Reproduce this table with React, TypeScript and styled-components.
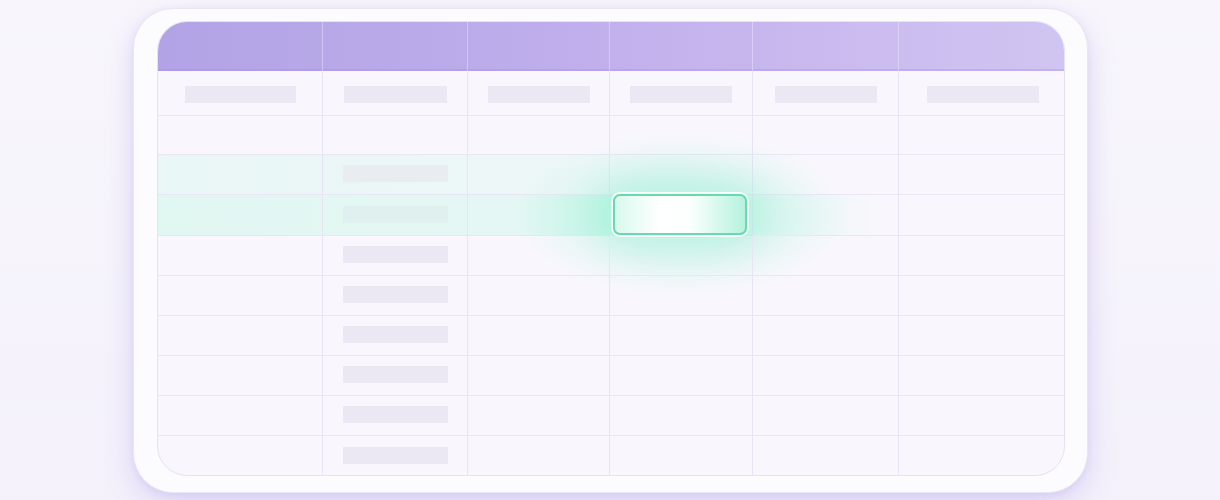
import styled, { createGlobalStyle } from "styled-components";

const GlobalStyle = createGlobalStyle`
  html, body {
    margin: 0;
    padding: 0;
    background: #f6f3fb;
    font-family: "Inter", "Liberation Sans", sans-serif;
  }
`;

const COLS = [165, 145, 142, 143, 146, 167];
const BODY_ROWS = 9;
const HIGHLIGHT_ROW = 2;
const HIGHLIGHT_COL = 3;

const Page = styled.div`
  width: 1220px;
  height: 500px;
  display: flex;
  justify-content: center;
  padding-top: 8px;
  box-sizing: border-box;
  background: linear-gradient(180deg, #f8f6fc 0%, #f4f1fb 100%);
  overflow: hidden;
`;

const Card = styled.div`
  width: 955px;
  height: 485px;
  margin-left: 1px;
  box-sizing: border-box;
  padding: 12px 22px 16px 23px;
  border-radius: 40px;
  background: #fcfbfe;
  border: 1px solid #ebe6f7;
  box-shadow: 0 10px 28px rgba(150, 128, 228, 0.28),
    0 2px 6px rgba(150, 128, 228, 0.12);
`;

const Table = styled.div`
  width: 908px;
  height: 455px;
  box-sizing: border-box;
  border: 1px solid #e6e1f5;
  border-radius: 30px;
  overflow: hidden;
  background: #f9f7fd;
  display: flex;
  flex-direction: column;
`;

const Row = styled.div<{ $h: number; $tint?: "soft" | "strong" }>`
  display: grid;
  grid-template-columns: ${COLS.map((c) => `${c}px`).join(" ")};
  height: ${(p) => p.$h}px;
  flex-shrink: 0;
  background: ${(p) =>
    p.$tint === "strong"
      ? "linear-gradient(90deg, rgba(200,246,230,0.5) 0%, rgba(200,246,230,0.42) 40%, rgba(185,246,226,0.7) 50%, rgba(200,246,230,0) 80%)"
      : p.$tint === "soft"
      ? "linear-gradient(90deg, rgba(212,246,236,0.45) 0%, rgba(212,246,236,0.32) 45%, rgba(212,246,236,0) 72%)"
      : "transparent"};
`;

const HeaderRow = styled(Row)`
  background: linear-gradient(90deg, #b2a3e6 0%, #bfaeeb 45%, #cab9ef 72%, #d0c4f1 100%);
  box-shadow: inset 0 -2px 0 rgba(160, 140, 225, 0.3);
`;

const HeadCell = styled.div<{ $last?: boolean }>`
  border-right: ${(p) => (p.$last ? "none" : "1px solid rgba(235, 228, 252, 0.5)")};
`;

const Cell = styled.div<{ $last?: boolean; $lastRow?: boolean }>`
  position: relative;
  display: flex;
  align-items: center;
  justify-content: center;
  border-right: ${(p) => (p.$last ? "none" : "1px solid #e8e3f5")};
  border-bottom: ${(p) => (p.$lastRow ? "none" : "1px solid #eae6f6")};
`;

const Bar = styled.div<{ $w: number; $tone?: "soft" | "strong"; $shift?: number }>`
  width: ${(p) => p.$w}px;
  height: 17px;
  margin-top: ${(p) => p.$shift ?? 0}px;
  background: ${(p) =>
    p.$tone === "strong" ? "#dff0ee" : p.$tone === "soft" ? "#e9edf2" : "#ebe8f3"};
`;

const Glow = styled.div`
  position: absolute;
  left: -95px;
  right: -95px;
  top: -62px;
  bottom: -62px;
  background: radial-gradient(
    ellipse at center,
    rgba(150, 240, 210, 0.5) 0%,
    rgba(160, 240, 214, 0.36) 32%,
    rgba(175, 242, 222, 0.14) 56%,
    rgba(180, 242, 224, 0) 72%
  );
  pointer-events: none;
`;

const Selected = styled.div`
  position: absolute;
  left: 3px;
  right: 5px;
  top: -1px;
  bottom: 0;
  box-sizing: border-box;
  border: 2px solid #6ad9ae;
  border-radius: 7px;
  background: linear-gradient(90deg, #d9f9ee 0%, #ffffff 35%, #fbfffd 58%, #b5f2de 100%);
  box-shadow: 0 0 0 2px rgba(255, 255, 255, 0.85), 0 0 30px 10px rgba(140, 238, 204, 0.3);
`;

const headerBars = [111, 103, 102, 102, 102, 112];

export default function App() {
  return (
    <>
      <GlobalStyle />
      <Page>
        <Card>
          <Table>
            <HeaderRow $h={49}>
              {COLS.map((_, i) => (
                <HeadCell key={i} $last={i === COLS.length - 1} />
              ))}
            </HeaderRow>
            <Row $h={45}>
              {COLS.map((_, i) => (
                <Cell key={i} $last={i === COLS.length - 1}>
                  <Bar $w={headerBars[i]} $shift={3} />
                </Cell>
              ))}
            </Row>
            <Row $h={39}>
              {COLS.map((_, i) => (
                <Cell key={i} $last={i === COLS.length - 1} />
              ))}
            </Row>
            {Array.from({ length: BODY_ROWS - 1 }).map((_, r) => {
              const tint = r === 0 ? "soft" : r === 1 ? "strong" : undefined;
              return (
                <Row key={r} $h={r === 1 ? 41 : 40} $tint={tint}>
                  {COLS.map((_, c) => (
                    <Cell
                      key={c}
                      $last={c === COLS.length - 1}
                      $lastRow={r === BODY_ROWS - 2}
                    >
                      {c === 1 && <Bar $w={105} $tone={tint} $shift={-2} />}
                      {r === HIGHLIGHT_ROW - 1 && c === HIGHLIGHT_COL && (
                        <>
                          <Glow />
                          <Selected />
                        </>
                      )}
                    </Cell>
                  ))}
                </Row>
              );
            })}
          </Table>
        </Card>
      </Page>
    </>
  );
}
